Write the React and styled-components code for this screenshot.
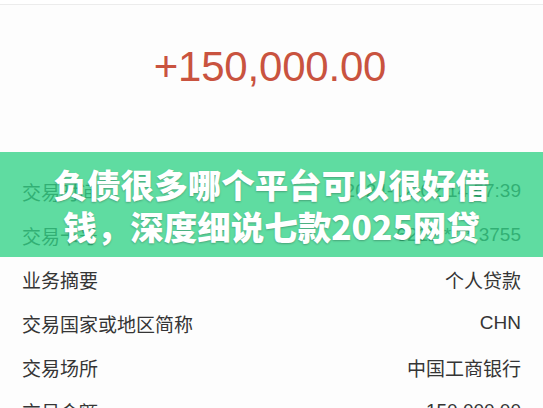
import styled, { createGlobalStyle } from 'styled-components';

const GlobalStyle = createGlobalStyle`
  html, body {
    margin: 0;
    padding: 0;
    background: #ffffff;
  }
  body {
    font-family: "Liberation Sans", "Noto Sans CJK SC", sans-serif;
  }
`;

const Page = styled.div`
  position: relative;
  width: 543px;
  height: 408px;
  overflow: hidden;
  background: #fdfdfd;
`;

const TopBar = styled.div`
  height: 4px;
  border-bottom: 1px solid #ececec;
  background: #ffffff;
`;

const AmountBlock = styled.div`
  height: 164px;
  box-sizing: border-box;
  padding-top: 41px;
  display: flex;
  justify-content: center;
  align-items: flex-start;
`;

const Amount = styled.div`
  font-family: "Liberation Sans", sans-serif;
  font-size: 42px;
  line-height: 1;
  letter-spacing: -0.2px;
  color: #c9533f;
  margin-right: 3px;
`;

const List = styled.div`
  display: flex;
  flex-direction: column;
  padding: 0 22px 0 22px;
`;

const Row = styled.div`
  height: 44px;
  display: flex;
  justify-content: space-between;
  align-items: center;
  font-size: 19px;
  color: #353535;
`;

const Label = styled.span`
  font-family: "Noto Sans CJK SC", sans-serif;
`;

const Value = styled.span`
  font-family: "Liberation Sans", "Noto Sans CJK SC", sans-serif;
`;

const Band = styled.div`
  position: absolute;
  left: 0;
  right: 0;
  top: 152px;
  height: 105px;
  background: rgba(50, 210, 135, 0.78);
  display: flex;
  flex-direction: column;
  justify-content: center;
  align-items: center;
`;

const TitleLine = styled.div`
  font-family: "Noto Sans CJK SC", sans-serif;
  font-weight: 900;
  font-size: 33.5px;
  line-height: 42px;
  color: #ffffff;
  white-space: nowrap;
  text-shadow: 0 1px 2px rgba(0, 0, 0, 0.25);
`;

const rows = [
  ['交易时间', '2024-12-02 14:57:39'],
  ['交易卡号', '6212 **** 3755'],
  ['业务摘要', '个人贷款'],
  ['交易国家或地区简称', 'CHN'],
  ['交易场所', '中国工商银行'],
  ['交易金额', '150,000.00']
];

const App = () => {
  return (
    <>
      <GlobalStyle />
      <Page>
        <TopBar />
        <AmountBlock>
          <Amount>+150,000.00</Amount>
        </AmountBlock>
        <List>
          {rows.map(([label, value]) => (
            <Row key={label}>
              <Label>{label}</Label>
              <Value>{value}</Value>
            </Row>
          ))}
        </List>
        <Band>
          <TitleLine>负债很多哪个平台可以很好借</TitleLine>
          <TitleLine>钱，深度细说七款2025网贷</TitleLine>
        </Band>
      </Page>
    </>
  );
};

export default App;
